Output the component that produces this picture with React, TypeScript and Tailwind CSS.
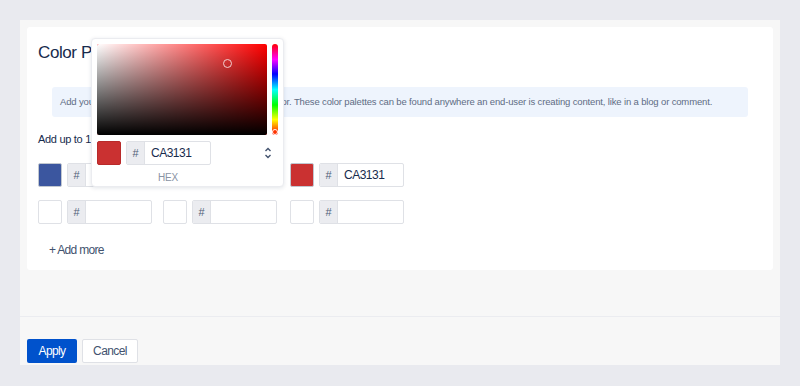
import React from "react";

const font = { fontFamily: '"Liberation Sans", Arial, sans-serif' };

function HexInput({ value, width = "w-[85px]" }: { value?: string; width?: string }) {
  return (
    <div className={`flex h-[24px] ${width} rounded-[2px] border border-[#dfe1e6] bg-white overflow-hidden`}>
      <div className="w-[18px] shrink-0 bg-[#ebecf0] border-r border-[#dfe1e6] flex items-center justify-center text-[11px] text-[#505f79]">#</div>
      <div className="flex items-center pl-[6px] text-[12px] tracking-[-0.5px] text-[#172b4d]">{value}</div>
    </div>
  );
}

function Swatch({ color }: { color?: string }) {
  return (
    <div
      className={`w-[24px] h-[24px] rounded-[2px] border ${color ? "border-[#c1c7d0]" : "border-[#dfe1e6] bg-white"}`}
      style={color ? { backgroundColor: color } : undefined}
    />
  );
}

function Cell({ color, value, w }: { color?: string; value?: string; w: string }) {
  return (
    <div className={`flex gap-[5px] ${w}`}>
      <Swatch color={color} />
      <HexInput value={value} />
    </div>
  );
}

export default function App() {
  return (
    <div className="relative w-[800px] h-[386px] bg-[#e9eaef] pt-[20px] pl-[20px]" style={font}>
      <div className="w-[760px] h-[345px] bg-[#f7f7f7] flex flex-col">
        <div className="mx-[7px] mt-[7px] h-[243px] bg-white rounded-[3px] px-[11px] pt-[14px]">
          <div className="text-[17px] tracking-[-0.4px] leading-[24px] text-[#172b4d]">Color Palettes</div>
          <div className="mt-[22px] mx-[14px] h-[30px] rounded-[3px] bg-[#eef4fd] flex items-center px-[8px] text-[9.5px] tracking-[-0.15px] text-[#5e6c84] whitespace-nowrap">
            Add your own custom colors to be used in this text editor. These color palettes can be found anywhere an end-user is creating content, like in a blog or comment.
          </div>
          <div className="mt-[14px] text-[11px] tracking-[-0.3px] leading-[16px] text-[#172b4d]">Add up to 10 colors</div>
          <div className="mt-[16px] flex">
            <Cell color="#3b569f" w="w-[125px]" />
            <Cell color="#ffffff" w="w-[127px]" />
            <Cell color="#ca3131" value="CA3131" w="w-[120px]" />
          </div>
          <div className="mt-[13px] flex">
            <Cell w="w-[125px]" />
            <Cell w="w-[127px]" />
            <Cell w="w-[120px]" />
          </div>
          <div className="mt-[17px] pl-[11px] text-[12px] tracking-[-0.7px] text-[#42526e]">+ Add more</div>
        </div>
        <div className="h-[46px]" />
        <div className="border-t border-[#ebecf0] pt-[22px] pl-[7px] flex gap-[5px]">
          <button className="h-[24px] w-[50px] rounded-[2px] bg-[#0052cc] text-white text-[12px] tracking-[-0.6px]">Apply</button>
          <button className="h-[24px] w-[56px] rounded-[2px] bg-white border border-[#dfe1e6] text-[#42526e] text-[12px] tracking-[-0.6px]">Cancel</button>
        </div>
      </div>

      {/* Color picker popover */}
      <div className="absolute left-[91px] top-[38px] w-[193px] h-[149px] bg-white rounded-[4px] border border-[#ebecf0] shadow-[0_1px_4px_rgba(9,30,66,0.12)] p-[5px]">
        <div className="flex gap-[5px]">
          <div className="relative w-[171px] h-[91px] rounded-[2px] overflow-hidden bg-[#ff0000]">
            <div className="absolute inset-0 bg-gradient-to-r from-white to-transparent" />
            <div className="absolute inset-0 bg-gradient-to-b from-transparent to-black" />
            <div className="absolute left-[126px] top-[15px] w-[9px] h-[9px] rounded-full border border-[#f3d0d0]" />
          </div>
          <div
            className="relative w-[6px] h-[91px] rounded-full"
            style={{ background: "linear-gradient(to bottom, #ff0000, #ff00ff 17%, #0000ff 33%, #00ffff 50%, #00ff00 67%, #ffff00 83%, #ff0000)" }}
          >
            <div className="absolute left-0 bottom-0 w-[6px] h-[6px] rounded-full border border-white bg-[#ff3300]" />
          </div>
        </div>
        <div className="mt-[6px] flex items-center">
          <div className="w-[24px] h-[24px] rounded-[2px] bg-[#ca3131] border border-[#b82a2a]" />
          <div className="ml-[5px]">
            <HexInput value="CA3131" width="w-[85px]" />
          </div>
          <svg className="ml-[53px]" width="8" height="12" viewBox="0 0 8 12" fill="none" stroke="#42526e" strokeWidth="1.4">
            <path d="M1.5 4 L4 1.5 L6.5 4" />
            <path d="M1.5 8 L4 10.5 L6.5 8" />
          </svg>
        </div>
        <div className="mt-[5px] w-[142px] text-center text-[10px] tracking-[-0.2px] text-[#8993a4]">HEX</div>
      </div>
    </div>
  );
}
